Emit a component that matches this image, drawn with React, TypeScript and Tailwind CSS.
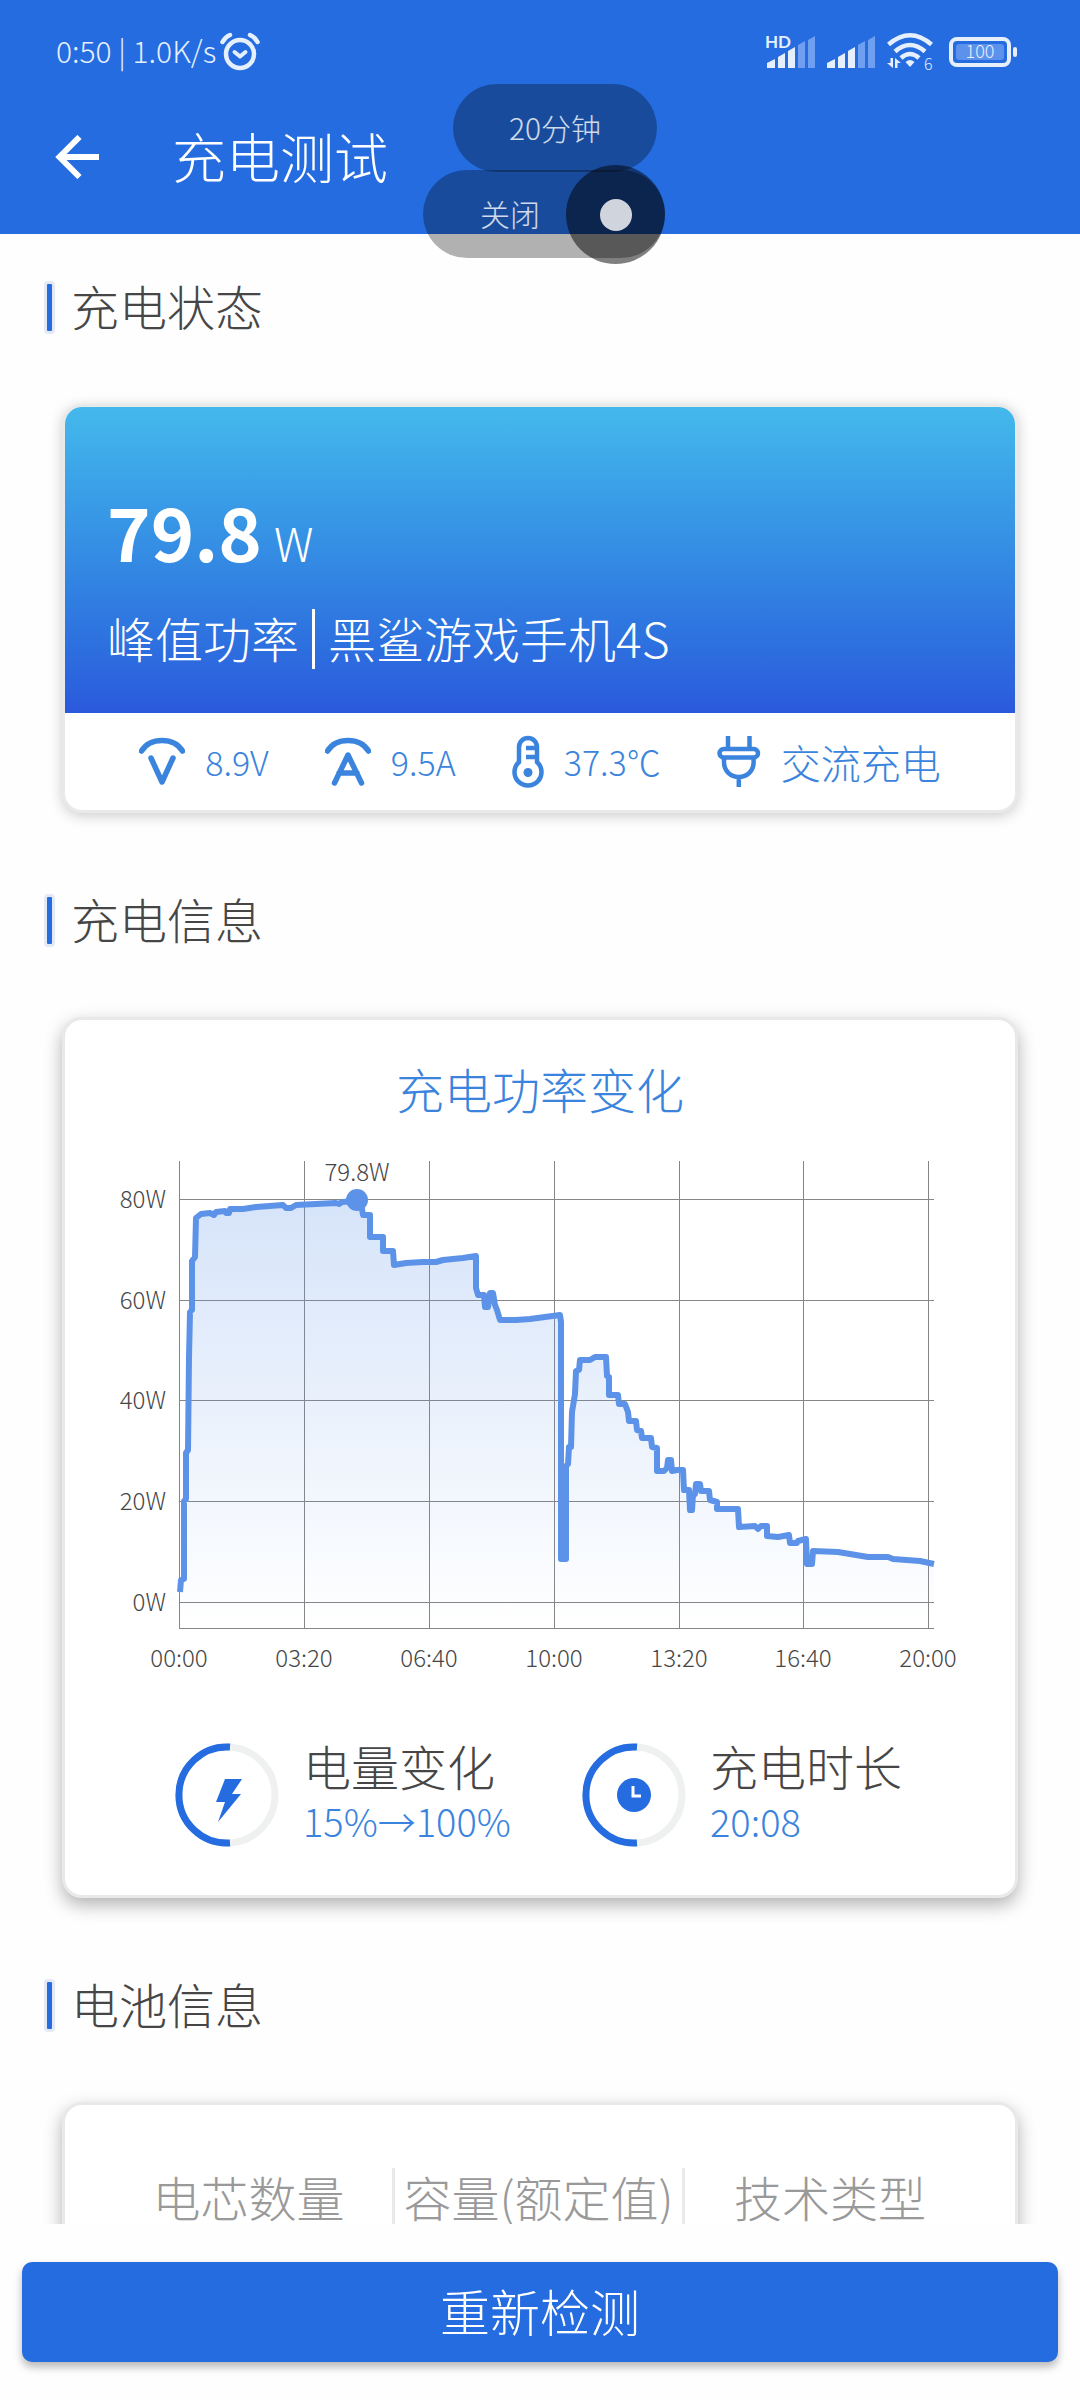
import type { ReactNode } from 'react';

const GRID_X = [
  { x: 0, label: '00:00' },
  { x: 125, label: '03:20' },
  { x: 250, label: '06:40' },
  { x: 375, label: '10:00' },
  { x: 500, label: '13:20' },
  { x: 624, label: '16:40' },
  { x: 749, label: '20:00' },
];

const GRID_Y = [
  { y: 38, label: '80W' },
  { y: 139, label: '60W' },
  { y: 239, label: '40W' },
  { y: 340, label: '20W' },
  { y: 441, label: '0W' },
];

const PLOT_WIDTH = 755;
const PLOT_HEIGHT = 467;

// x,y pairs inside the plot area
const POWER_LINE =
  '1,431 2,419 5,418 5,340 7,338 7,292 9,289 10,196 11,151 13,149 13,100 16,96 17,57 22,53 31,52 35,54 37,51 46,50 47,52 50,52 51,48 64,48 77,46 104,44 107,47 112,47 117,44 137,43 157,42 160,43 163,41 177,40 ' +
  '183,48 184,54 191,54 191,76 204,76 204,90 214,90 215,104 227,102 244,101 257,101 264,99 284,97 297,95 297,127 299,134 305,134 306,146 309,146 311,132 314,132 316,144 318,149 321,159 337,159 351,158 381,154 ' +
  '382,161 382,398 387,398 387,305 389,303 390,286 392,286 393,251 396,233 397,210 400,209 401,199 411,199 416,196 427,196 428,215 430,216 430,234 439,234 440,243 446,243 449,251 450,260 457,260 458,269 462,270 463,277 472,277 473,286 478,287 478,310 485,310 488,307 489,299 492,299 493,310 498,309 504,309 ' +
  '505,329 510,329 511,349 513,349 514,334 516,333 517,323 521,323 522,330 530,330 531,339 538,341 538,348 559,348 560,366 576,365 579,368 582,365 588,365 588,375 599,376 610,374 611,382 618,382 619,380 627,378 628,403 633,403 634,390 659,391 689,396 709,396 714,398 741,400 755,403';

function SignalBars() {
  return (
    <>
      <g fill="#e6effd">
        <path d="M0 68v-5l8-4v9z" />
        <path d="M11 68v-11l7-4v15z" />
        <path d="M21 68v-17l7-4v21z" />
      </g>
      <g fill="#6f9ff0">
        <path d="M31 68V45l7-4v27z" />
        <path d="M41 68V40l7-4v32z" />
      </g>
    </>
  );
}

function AlarmIcon() {
  return (
    <svg viewBox="0 0 40 40" className="h-10 w-10" fill="none" stroke="#e6effd" aria-hidden="true">
      <circle cx="20" cy="22" r="14" strokeWidth="4.5" />
      <path d="M14.500 20l5.500 4.500 5.500-4.500" strokeWidth="4" strokeLinecap="round" strokeLinejoin="round" />
      <path d="M2.500 10Q5 5 10 3M37.500 10Q35 5 30 3" strokeWidth="4.500" strokeLinecap="round" />
    </svg>
  );
}

function WifiIcon() {
  return (
    <svg viewBox="0 0 46 40" className="h-10 w-[46px] overflow-visible" aria-hidden="true">
      <g fill="none" stroke="#e6effd" strokeWidth="4.5">
        <path d="M1.500 12.500Q23-6 44.500 12.500" />
        <path d="M8 19.500Q23 6.500 38 19.500" />
        <path d="M14 26Q23 18 32 26" />
      </g>
      <path d="M18.500 30Q23 26 27.500 30L23 35z" fill="#e6effd" />
      <path d="M3.500 26h2.500v10l-6-5h3.500zM8 36V26l6 5h-3.500v5z" fill="#e6effd" />
      <text x="37" y="38" fontSize="16" fill="#e6effd">
        6
      </text>
    </svg>
  );
}

function BatteryIcon() {
  return (
    <svg viewBox="0 0 68 32" className="h-8 w-[68px]" aria-hidden="true">
      <rect x="2" y="3" width="58" height="26" rx="6" fill="none" stroke="#e6effd" strokeWidth="4" />
      <rect x="7" y="8" width="48" height="16" rx="3" fill="#5d92ec" />
      <rect x="64" y="11" width="4" height="10" rx="2" fill="#e6effd" />
      <text x="31" y="22" fontSize="18" textAnchor="middle" fill="#e6effd">
        100
      </text>
    </svg>
  );
}

function VoltIcon() {
  return (
    <svg viewBox="0 0 46 50" className="h-[50px] w-[46px]" fill="none" stroke="#3b84dd" strokeWidth="5.500" strokeLinecap="round" strokeLinejoin="round" aria-hidden="true">
      <path d="M2.500 14Q9 3.500 23 3.500T43.500 14" />
      <path d="M12 21L23 45 34 21" />
    </svg>
  );
}

function AmpIcon() {
  return (
    <svg viewBox="0 0 46 50" className="h-[50px] w-[46px]" fill="none" stroke="#3b84dd" strokeWidth="5.500" strokeLinecap="round" strokeLinejoin="round" aria-hidden="true">
      <path d="M2.500 14Q9 3.500 23 3.500T43.500 14" />
      <path d="M9.500 46L23 18l13.500 28M14 36h18" />
    </svg>
  );
}

function ThermometerIcon() {
  return (
    <svg viewBox="0 0 32 54" className="h-[54px] w-8" fill="none" stroke="#3b84dd" strokeWidth="4.500" aria-hidden="true">
      <path d="M7 27V12a9 9 0 0 1 18 0v15a13.500 13.500 0 1 1-18 0Z" />
      <path d="M14 13h9M14 22h9" />
      <circle cx="16" cy="37.500" r="4.500" fill="#3b84dd" stroke="none" />
    </svg>
  );
}

function PlugIcon() {
  return (
    <svg viewBox="0 0 44 52" className="h-[52px] w-11" fill="none" stroke="#3b84dd" strokeWidth="4.500" aria-hidden="true">
      <path d="M11 0v12M32.500 0v12" />
      <rect x="2.500" y="13" width="38.500" height="8.500" rx="4.250" />
      <path d="M7 22v4c0 9 6.500 15 14.800 15s14.800-6 14.800-15v-4M21.800 41v10" />
    </svg>
  );
}

function Ring({ children }: { children: ReactNode }) {
  return (
    <svg viewBox="0 0 104 104" className="h-[104px] w-[104px] shrink-0" aria-hidden="true">
      <circle cx="52" cy="52" r="48" fill="none" stroke="#eff1f0" strokeWidth="7" />
      <path d="M55 4.100A48 48 0 1 0 55 99.900" fill="none" stroke="#246ce0" strokeWidth="7" />
      {children}
    </svg>
  );
}

function SectionTitle({ children }: { children: ReactNode }) {
  return (
    <h2 className="mb-[70px] flex h-[53px] items-center gap-4 pl-11 text-[48px] leading-[53px]">
      <span className="h-full w-[11px] rounded-[4px] border-3 border-[#e3eaf6] bg-[#246ce0]" />
      <span className="pb-1">{children}</span>
    </h2>
  );
}

function Reading({ icon, children }: { icon: ReactNode; children: ReactNode }) {
  return (
    <li className="flex items-center gap-5">
      {icon}
      {children}
    </li>
  );
}

function Summary({ icon, label, value }: { icon: ReactNode; label: string; value: string }) {
  return (
    <div className="flex items-center gap-6">
      <Ring>{icon}</Ring>
      <div>
        <p className="text-[48px] leading-[52px]">{label}</p>
        <p className="text-[38px] leading-[60px] text-[#3b84dd]">{value}</p>
      </div>
    </div>
  );
}

function PowerChart() {
  return (
    <svg viewBox="0 0 950 590" className="block w-full" role="img" aria-label="充电功率变化">
      <defs>
        <linearGradient id="power-fill" x1="0" y1="0" x2="0" y2="1">
          <stop offset="0" stopColor="#5c93e8" stopOpacity="0.25" />
          <stop offset="1" stopColor="#5c93e8" stopOpacity="0" />
        </linearGradient>
      </defs>
      <g transform="translate(114 42)">
        <g stroke="#868686" strokeWidth="1" shapeRendering="crispEdges">
          {GRID_X.map(({ x }) => (
            <line key={x} x1={x} x2={x} y1="0" y2={PLOT_HEIGHT} />
          ))}
          {GRID_Y.map(({ y }) => (
            <line key={y} x1="0" x2={PLOT_WIDTH} y1={y} y2={y} />
          ))}
          <line x1="0" x2={PLOT_WIDTH} y1={PLOT_HEIGHT} y2={PLOT_HEIGHT} />
        </g>
        <polygon points={`1,${PLOT_HEIGHT} ${POWER_LINE} ${PLOT_WIDTH},${PLOT_HEIGHT}`} fill="url(#power-fill)" />
        <polyline points={POWER_LINE} fill="none" stroke="#5c93e8" strokeWidth="6" strokeLinejoin="round" />
        <circle cx="178" cy="39" r="11" fill="#5c93e8" />
        <g fill="#464646" fontSize="24">
          <text x="178" y="20" textAnchor="middle">
            79.8W
          </text>
          {GRID_Y.map(({ y, label }) => (
            <text key={label} x="-13" y={y + 9} textAnchor="end">
              {label}
            </text>
          ))}
          {GRID_X.map(({ x, label }) => (
            <text key={label} x={x} y="506" textAnchor="middle">
              {label}
            </text>
          ))}
        </g>
      </g>
    </svg>
  );
}

const cardClass = 'mx-[62px] overflow-hidden rounded-[20px] border-3 border-[#e9e9e9] bg-white';

export default function App() {
  return (
    <div className="relative flex h-screen flex-col bg-[#fefefe] font-['Noto_Sans_CJK_SC',sans-serif] font-light text-[#464646]">
      <header className="shrink-0 bg-[#246ce0] pb-6 text-white">
        <div className="flex h-[104px] items-center pr-[63px] pl-14 text-[#e6effd]">
          <span className="mr-1 pb-1 text-[30px]">0:50 | 1.0K/s</span>
          <AlarmIcon />
          <div className="ml-auto flex items-center">
            <svg viewBox="-2 32 50 40" className="mr-3 h-10 w-[50px]" aria-hidden="true">
              <SignalBars />
              <text x="-2" y="48" fontSize="17" fontWeight="700" fill="#e6effd" fontFamily="Lato, sans-serif">
                HD
              </text>
            </svg>
            <svg viewBox="0 32 48 40" className="mr-3 h-10 w-12" aria-hidden="true">
              <SignalBars />
            </svg>
            <WifiIcon />
            <span className="ml-4 flex">
              <BatteryIcon />
            </span>
          </div>
        </div>
        <div className="flex h-[106px] items-center pl-[55px]">
          <button type="button" aria-label="返回" className="mr-[73px]">
            <svg viewBox="0 0 44 44" className="h-11 w-11" fill="none" stroke="currentColor" strokeWidth="6" aria-hidden="true">
              <path d="M44 22H5M24.500 2L4.500 22l20 20" />
            </svg>
          </button>
          <h1 className="pb-1 text-[54px]">充电测试</h1>
        </div>
      </header>

      <main className="min-h-0 flex-1 overflow-y-auto pt-[47px] [scrollbar-width:none]">
        <section className="mb-[81px]">
          <SectionTitle>充电状态</SectionTitle>
          <div className={`${cardClass} shadow-[0_3px_14px_rgba(0,0,0,0.2)]`}>
            <div className="bg-linear-to-b from-[#44b9ec] via-[#348ae3] to-[#2b59dc] px-[42px] pt-[68px] pb-11 text-white">
              <p className="flex h-[110px] items-baseline gap-3 leading-[110px]">
                <span className="text-[74px] font-bold">79.8</span>
                <span className="text-[46px]">W</span>
              </p>
              <p className="mt-6 flex h-[60px] items-center text-[48px]">
                <span className="pb-1">峰值功率</span>
                <span className="mx-[13px] h-[60px] w-[3px] bg-white" />
                <span className="pb-1">黑鲨游戏手机4S</span>
              </p>
            </div>
            <ul className="flex h-[97px] items-center justify-center gap-14 text-[34px] text-[#3b84dd]">
              <Reading icon={<VoltIcon />}>8.9V</Reading>
              <Reading icon={<AmpIcon />}>9.5A</Reading>
              <Reading icon={<ThermometerIcon />}>37.3℃</Reading>
              <Reading icon={<PlugIcon />}>
                <span className="text-[40px]">交流充电</span>
              </Reading>
            </ul>
          </div>
        </section>

        <section className="mb-[81px]">
          <SectionTitle>充电信息</SectionTitle>
          <div className={`${cardClass} pt-10 pb-11 shadow-[0_7px_18px_rgba(0,0,0,0.3)]`}>
            <h3 className="mb-[3px] text-center text-[48px] leading-[56px] text-[#3b84dd]">充电功率变化</h3>
            <PowerChart />
            <div className="mt-[30px] grid grid-cols-[407px_auto] pl-[110px]">
              <Summary
                icon={<path d="M50 36h17L57 51h9L43 79l7-20h-9z" fill="#246ce0" />}
                label="电量变化"
                value="15%→100%"
              />
              <Summary
                icon={
                  <>
                    <circle cx="52" cy="52" r="17" fill="#246ce0" />
                    <path d="M51 43v10h8" fill="none" stroke="#fff" strokeWidth="3" />
                  </>
                }
                label="充电时长"
                value="20:08"
              />
            </div>
          </div>
        </section>

        <section className="pb-10">
          <SectionTitle>电池信息</SectionTitle>
          <div className={`${cardClass} px-10 pt-[63px] pb-16 shadow-[0_7px_18px_rgba(0,0,0,0.3)]`}>
            <ul className="grid grid-cols-3 divide-x-3 divide-[#e9e9e9] text-center text-[48px] leading-[56px] whitespace-nowrap text-[#999999]">
              <li className="pb-2">电芯数量</li>
              <li className="pb-2">容量(额定值)</li>
              <li className="pb-2">技术类型</li>
            </ul>
          </div>
        </section>
      </main>

      <footer className="relative shrink-0 bg-[#fefefe] px-[22px] py-[38px]">
        <button
          type="button"
          className="h-[100px] w-full rounded-[10px] bg-[#246ce0] pb-1 text-[50px] text-white shadow-[0_5px_8px_rgba(0,0,0,0.28)]"
        >
          重新检测
        </button>
      </footer>

      {/* floating auto-off timer */}
      <div className="absolute top-[84px] left-[423px] flex w-[242px] flex-col text-[30px] text-white/80">
        <button type="button" className="mr-2 h-[88px] w-[204px] self-end rounded-full bg-black/30 pb-0.5">
          20分钟
        </button>
        <div className="relative -mt-0.5 flex h-[88px] items-center rounded-full bg-black/30 pb-0.5 pl-[57px]">
          <button type="button">关闭</button>
          <button
            type="button"
            aria-label="计时器"
            className="absolute -top-[5px] right-0 flex h-[99px] w-[99px] items-center justify-center rounded-full bg-black/50"
          >
            <span className="h-8 w-8 rounded-full bg-[#d0d4dd]" />
          </button>
        </div>
      </div>
    </div>
  );
}
